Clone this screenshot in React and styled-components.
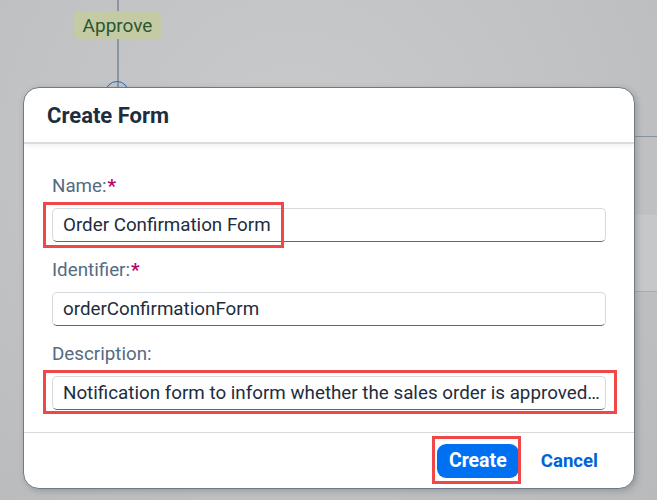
import React from "react";
import styled, { createGlobalStyle } from "styled-components";

const GlobalStyle = createGlobalStyle`
  html, body {
    margin: 0;
    padding: 0;
  }
  body {
    font-family: Roboto, "Liberation Sans", Arial, sans-serif;
    color: #1d2d3e;
  }
`;

// background process canvas, dimmed behind the dialog
const Canvas = styled.div`
  position: relative;
  width: 657px;
  height: 500px;
  overflow: hidden;
  background: radial-gradient(ellipse at 45% 30%, #c9cacc 0%, #c1c2c4 55%, #b9babc 100%);
`;

const Connector = styled.div`
  position: absolute;
  left: 117px;
  top: 0;
  width: 2px;
  height: 90px;
  background: #8c96a2;
`;

const ApproveTag = styled.div`
  position: absolute;
  left: 74px;
  top: 11px;
  width: 87px;
  height: 28px;
  border-radius: 5px;
  background: #c4caa4;
  color: #2a5730;
  font-size: 19px;
  display: flex;
  align-items: center;
  justify-content: center;
`;

const PortCircle = styled.div`
  position: absolute;
  left: 105px;
  top: 81px;
  width: 24px;
  height: 24px;
  border-radius: 50%;
  border: 1.5px solid #2a63c4;
  box-sizing: border-box;
`;

const SidePanel = styled.div`
  position: absolute;
  left: 600px;
  top: 136px;
  width: 70px;
  height: 154px;
  border-top: 1px solid #8891a0;
  border-bottom: 1px solid #a8abb0;
  background: linear-gradient(#bfc0c2 0%, #bfc0c2 50%, #c6c7c9 51%, #c6c7c9 100%);
`;

const Dialog = styled.div`
  position: absolute;
  left: 23px;
  top: 87px;
  width: 612px;
  height: 402px;
  box-sizing: border-box;
  background: #fff;
  border: 1px solid #6f7a87;
  border-radius: 16px;
  box-shadow: 2px 2px 6px rgba(40, 50, 60, 0.25);
  display: flex;
  flex-direction: column;
  overflow: hidden;
`;

const Header = styled.div`
  height: 54px;
  flex-shrink: 0;
  padding: 0 23px;
  display: flex;
  align-items: center;
  border-bottom: 2px solid #dcdcdc;
  box-shadow: 0 2px 4px rgba(0, 0, 0, 0.06);
`;

const Title = styled.h1`
  margin: 0;
  font-size: 22px;
  font-weight: 700;
  color: #1d2d3e;
  padding-top: 1px;
`;

const Content = styled.div`
  flex: 1;
  padding: 30px 28px 0 28px;
  display: flex;
  flex-direction: column;
  gap: 16px;
`;

const Field = styled.div`
  display: flex;
  flex-direction: column;
  gap: 10px;
`;

const Label = styled.label`
  font-size: 18.8px;
  line-height: 24px;
  height: 24px;
  color: #556b82;
`;

const Required = styled.span`
  color: #ba066c;
  font-weight: 700;
  margin-left: 1px;
`;

const InputWrap = styled.div`
  position: relative;
  height: 34px;
`;

const Input = styled.input`
  width: 100%;
  height: 34px;
  box-sizing: border-box;
  padding: 0 5px 0 10px;
  border: 1px solid #d5dadf;
  border-bottom: 1px solid #556b82;
  border-radius: 5px;
  background: #fff;
  font-family: inherit;
  font-size: 18.8px;
  color: #1d2d3e;
  text-overflow: ellipsis;
  outline: none;
`;

// red annotation frames drawn over the screenshot
const Highlight = styled.div`
  position: absolute;
  left: ${(p) => p.$left}px;
  top: ${(p) => p.$top}px;
  width: ${(p) => p.$width}px;
  height: ${(p) => p.$height}px;
  border: 3px solid #f04848;
  box-sizing: border-box;
  pointer-events: none;
`;

const Footer = styled.div`
  height: 55px;
  flex-shrink: 0;
  border-top: 1px solid #d9d9d9;
  padding: 0 24px 0 0;
  display: flex;
  align-items: center;
  justify-content: flex-end;
  gap: 10px;
`;

const ButtonWrap = styled.div`
  position: relative;
  display: flex;
`;

const Button = styled.button`
  height: 34px;
  width: ${(p) => (p.$primary ? "82px" : "auto")};
  padding: ${(p) => (p.$primary ? "0" : "0 12px")};
  border: none;
  border-radius: 9px;
  font-family: inherit;
  font-size: ${(p) => (p.$primary ? "19.5px" : "18.6px")};
  font-weight: 700;
  background: ${(p) => (p.$primary ? "#0070f2" : "transparent")};
  color: ${(p) => (p.$primary ? "#fff" : "#0064d9")};
  cursor: pointer;
`;

const fields = [
  { label: "Name:", required: true, value: "Order Confirmation Form", mark: { left: -9, top: -6, width: 241, height: 46 } },
  { label: "Identifier:", required: true, value: "orderConfirmationForm" },
  {
    label: "Description:",
    value: "Notification form to inform whether the sales order is approved...",
    mark: { left: -9, top: -6, width: 574, height: 44 },
  },
];

export default function App() {
  return (
    <>
      <GlobalStyle />
      <Canvas>
        <Connector />
        <ApproveTag>Approve</ApproveTag>
        <PortCircle />
        <SidePanel />
        <Dialog>
          <Header>
            <Title>Create Form</Title>
          </Header>
          <Content>
            {fields.map((f) => (
              <Field key={f.label}>
                <Label>
                  {f.label}
                  {f.required && <Required>*</Required>}
                </Label>
                <InputWrap>
                  <Input readOnly value={f.value} />
                  {f.mark && (
                    <Highlight $left={f.mark.left} $top={f.mark.top} $width={f.mark.width} $height={f.mark.height} />
                  )}
                </InputWrap>
              </Field>
            ))}
          </Content>
          <Footer>
            <ButtonWrap>
              <Button $primary>Create</Button>
              <Highlight $left={-5} $top={-8} $width={89} $height={48} />
            </ButtonWrap>
            <Button>Cancel</Button>
          </Footer>
        </Dialog>
      </Canvas>
    </>
  );
}
